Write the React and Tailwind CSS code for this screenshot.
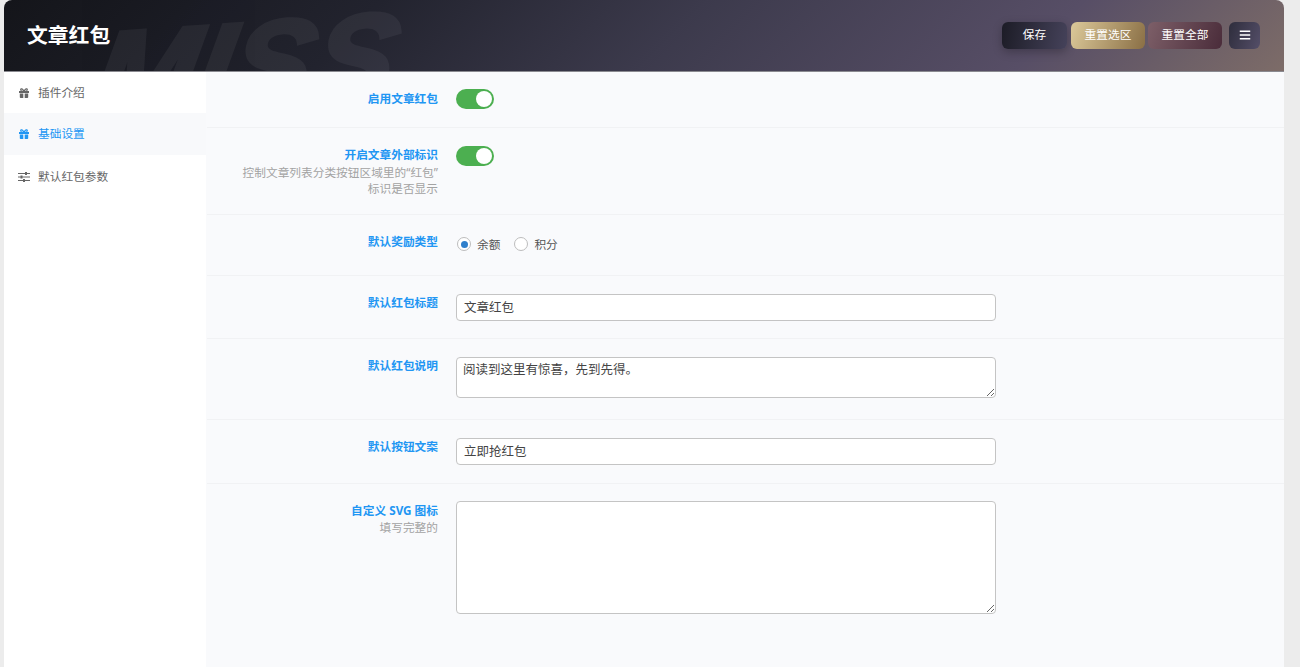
import React from "react";
import { FaBars } from "react-icons/fa";

const font = "[font-family:'Noto_Sans','Noto_Sans_CJK_SC',sans-serif]";

function GiftIcon() {
  return (
    <svg viewBox="0 0 10 10" className="h-[10px] w-[10px]" fill="currentColor">
      <path d="M1.6 0.6C2.6 0 4 0.6 5 2.2C6 0.6 7.4 0 8.4 0.6C9.2 1.2 9 2.4 8.2 3H10V5H0V3H1.8C1 2.4 0.8 1.2 1.6 0.6ZM2.5 1.5C2.2 1.7 2.4 2.4 3 2.7H4C3.6 2 2.9 1.3 2.5 1.5ZM7.5 1.5C7.1 1.3 6.4 2 6 2.7H7C7.6 2.4 7.8 1.7 7.5 1.5Z" fillRule="evenodd" />
      <path d="M0.8 5.6H4.3V10H1.6C1.1 10 0.8 9.7 0.8 9.2ZM5.7 5.6H9.2V9.2C9.2 9.7 8.9 10 8.4 10H5.7Z" />
    </svg>
  );
}

function SliderIcon() {
  return (
    <svg viewBox="0 0 12 10" className="h-[10px] w-[12px]" fill="currentColor">
      <rect x="0" y="1" width="12" height="1" />
      <rect x="7" y="0" width="2" height="3" />
      <rect x="0" y="4.5" width="12" height="1" />
      <rect x="2.5" y="3.5" width="2" height="3" />
      <rect x="0" y="8" width="12" height="1" />
      <rect x="5" y="7" width="2" height="3" />
    </svg>
  );
}

function Row({ label, desc, children, className }) {
  return (
    <div className={`flex border-b border-[#f1f2f4] ${className}`}>
      <div className="mt-[-1px] w-[231px] shrink-0 text-right">
        <div className="text-[11.7px] leading-[18px] font-bold text-[#2196f3]">{label}</div>
        {desc && <div className="mt-[1px] text-[11.7px] leading-[16px] text-[#a3a3a3]">{desc}</div>}
      </div>
      <div className="ml-[18px] flex-1">{children}</div>
    </div>
  );
}

function Toggle({ className }) {
  return (
    <div className={`flex h-[20px] w-[38px] items-center justify-end rounded-full bg-[#4caf50] pr-[2px] ${className}`}>
      <div className="h-[16px] w-[16px] rounded-full bg-white" />
    </div>
  );
}

function Radio({ on, label }) {
  return (
    <div className="flex items-center gap-[6px]">
      <div className="flex h-[14px] w-[14px] items-center justify-center rounded-full border border-[#bdbdbd] bg-white">
        {on && <div className="h-[7px] w-[7px] rounded-full bg-[#2f7fcb]" />}
      </div>
      <span className="text-[11.7px] leading-[18px] text-[#555]">{label}</span>
    </div>
  );
}

function Btn({ children, className }) {
  return (
    <div className={`flex h-[27px] items-center justify-center rounded-[6px] text-[11.7px] text-white ${className}`}>
      {children}
    </div>
  );
}

function Nav({ icon, label, active, className }) {
  return (
    <div className={`flex items-center gap-[8px] pl-[14px] text-[11.7px] ${active ? "bg-[#f8f9fb] text-[#2196f3]" : "text-[#666]"} ${className}`}>
      <span className="flex w-[12px] justify-center">{icon}</span>
      <span>{label}</span>
    </div>
  );
}

export default function App() {
  const field = "block w-[540px] rounded-[4px] border border-[#c4c4c4] bg-white text-[#444] outline-none";
  return (
    <div className={`h-[667px] overflow-hidden bg-[#ececec] pl-[4px] pr-[16px] ${font}`}>
      <div className="flex h-full flex-col overflow-hidden rounded-t-[8px] bg-[#f9fafc]">
        <header className="relative flex h-[72px] shrink-0 items-center justify-between overflow-hidden border-b border-[#8a8a90] bg-[linear-gradient(135deg,#14151a_0%,#22232e_28%,#3c3a4c_52%,#574e66_80%,#7d6c68_100%)] pl-[23px] pr-[24px]">
          <div className="absolute left-[90px] top-[4px] -rotate-[4deg] -skew-x-[14deg] text-[124px] leading-[124px] font-bold italic text-white opacity-[0.05] [font-family:'Liberation_Sans',sans-serif] [-webkit-text-stroke:4px_#fff]">MISS</div>
          <h1 className="relative text-[20.8px] font-bold text-white">文章红包</h1>
          <div className="relative flex items-center gap-[3px] pb-[1px]">
            <Btn className="mr-[1px] w-[65px] bg-[linear-gradient(100deg,#1c1c26,#45425a)] shadow-[0_3px_10px_rgba(0,0,0,0.25)]">保存</Btn>
            <Btn className="w-[74px] bg-[linear-gradient(110deg,#dcc99a,#8a6f45)]">重置选区</Btn>
            <Btn className="w-[74px] bg-[linear-gradient(110deg,#7d5f68,#4a2c3a)]">重置全部</Btn>
            <Btn className="ml-[4px] w-[31px] bg-[linear-gradient(110deg,#2e2d3c,#544e68)]"><FaBars className="text-[12px]" /></Btn>
          </div>
        </header>
        <div className="flex min-h-0 flex-1">
          <aside className="w-[202px] shrink-0 bg-white">
            <Nav icon={<GiftIcon />} label="插件介绍" className="h-[41px]" />
            <Nav icon={<GiftIcon />} label="基础设置" active className="h-[42px]" />
            <Nav icon={<SliderIcon />} label="默认红包参数" className="h-[42px] pt-[1px]" />
          </aside>
          <main className="ml-[1px] flex-1">
            <Row label="启用文章红包" className="h-[56px] pt-[18px]"><Toggle className="mt-[-1px]" /></Row>
            <Row label="开启文章外部标识" desc={<>控制文章列表分类按钮区域里的“红包”<br />标识是否显示</>} className="h-[87px] pt-[18px]"><Toggle /></Row>
            <Row label="默认奖励类型" className="h-[61px] pt-[18px]">
              <div className="mt-[1px] ml-[1px] flex h-[20px] items-center gap-[14px]"><Radio on label="余额" /><Radio label="积分" /></div>
            </Row>
            <Row label="默认红包标题" className="h-[63px] pt-[18px]">
              <input readOnly value="文章红包" className={`${field} h-[27px] px-[7px] pb-[2px] text-[12.5px]`} />
            </Row>
            <Row label="默认红包说明" className="h-[81px] pt-[18px]">
              <textarea readOnly value="阅读到这里有惊喜，先到先得。" className={`${field} h-[41px] px-[6px] pt-[3px] text-[12.5px] leading-[18px]`} />
            </Row>
            <Row label="默认按钮文案" className="h-[64px] pt-[18px]">
              <input readOnly value="立即抢红包" className={`${field} h-[27px] px-[7px] pb-[2px] text-[12.5px]`} />
            </Row>
            <div className="flex pt-[17px]">
              <div className="w-[231px] shrink-0 text-right">
                <div className="text-[11.7px] leading-[18px] font-bold text-[#2196f3]">自定义 SVG 图标</div>
                <div className="text-[11.7px] leading-[16px] text-[#a3a3a3]">填写完整的</div>
              </div>
              <div className="ml-[18px] flex-1">
                <textarea readOnly className={`${field} h-[113px]`} />
              </div>
            </div>
          </main>
        </div>
      </div>
    </div>
  );
}
